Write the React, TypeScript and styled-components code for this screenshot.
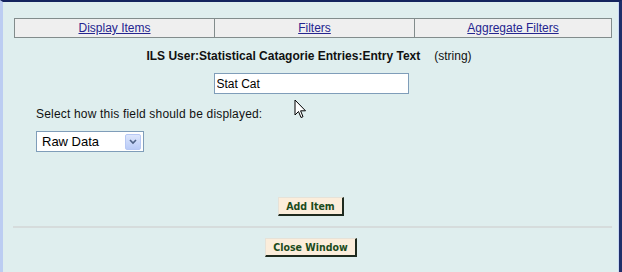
import React from "react";
import styled, { createGlobalStyle } from "styled-components";

const Global = createGlobalStyle`
  html, body { margin: 0; padding: 0; background: #e0eeee; }
  body { font-family: "Liberation Sans", Arial, sans-serif; }
`;

const Frame = styled.div`
  position: relative;
  box-sizing: border-box;
  width: 622px;
  height: 272px;
  overflow: hidden;
  background: #dfeeee;
  border-top: 2px solid #14245e;
  border-left: 3px solid #bccdf2;
  border-right: 3px solid #1e2e6a;
  box-shadow: inset -1px 0 0 #c8d8f4;
  padding: 16px 7px 0 11px;
  display: flex;
  flex-direction: column;
`;

const Tabs = styled.div`
  display: grid;
  grid-template-columns: 200px 200px 1fr;
  height: 20px;
  box-sizing: border-box;
  border: 1px solid #828c8c;
  background: #efefef;
`;

const Tab = styled.a<{ $last?: boolean }>`
  display: flex;
  align-items: center;
  justify-content: center;
  font-size: 12px;
  color: #25258f;
  text-decoration: underline;
  border-right: ${(p) => (p.$last ? "none" : "1px solid #828c8c")};
  cursor: pointer;
`;

const Title = styled.div`
  margin-top: 11px;
  text-align: center;
  font-size: 12px;
  line-height: 14px;
  color: #111;
  padding-right: 8px;
`;

const Bold = styled.b`
  font-weight: bold;
`;

const TypeNote = styled.span`
  margin-left: 14px;
  font-weight: normal;
`;

const InputRow = styled.div`
  display: flex;
  justify-content: center;
  margin-top: 10px;
  padding-right: 4px;
`;

const TextInput = styled.input`
  box-sizing: border-box;
  width: 195px;
  height: 21px;
  border: 1px solid #7f9db9;
  background: #fff;
  font-family: "Liberation Sans", Arial, sans-serif;
  font-size: 12px;
  color: #000;
  padding: 0 2px;
  outline: none;
`;

const Label = styled.div`
  margin-top: 13px;
  margin-left: 22px;
  font-size: 12px;
  line-height: 14px;
  letter-spacing: 0.18px;
  color: #111;
`;

const SelectBox = styled.div`
  margin-top: 10px;
  margin-left: 22px;
  box-sizing: border-box;
  width: 108px;
  height: 21px;
  border: 1px solid #7f9db9;
  background: #fff;
  display: flex;
  align-items: center;
  justify-content: space-between;
  padding: 0 2px 0 5px;
`;

const SelectText = styled.span`
  font-size: 13px;
  color: #000;
`;

const DropButton = styled.span`
  box-sizing: border-box;
  width: 16px;
  height: 16px;
  border: 1px solid #b7c8f4;
  background: linear-gradient(#dde6fc, #b9cbf7);
  border-radius: 2px;
  display: flex;
  align-items: center;
  justify-content: center;
`;

const ButtonRow = styled.div<{ $top: number }>`
  display: flex;
  justify-content: center;
  margin-top: ${(p) => p.$top}px;
  padding-right: 4px;
`;

const ActionButton = styled.button`
  box-sizing: border-box;
  height: 19px;
  padding: 0 7px;
  background: #fbeddb;
  border-style: solid;
  border-width: 1px 2px 2px 1px;
  border-color: #e6e2d8 #1e2a1e #1e2a1e #e6e2d8;
  font-family: "DejaVu Sans Condensed", "DejaVu Sans", Tahoma, sans-serif;
  font-weight: bold;
  font-size: 10.5px;
  color: #1b4b1b;
  cursor: pointer;
`;

const Rule = styled.hr`
  margin: 10px 0 0 -1px;
  border: none;
  height: 2px;
  background: #d6dcdc;
`;

const Cursor = styled.svg`
  position: absolute;
  left: 291px;
  top: 97px;
`;

export default function App() {
  return (
    <>
      <Global />
      <Frame>
        <Tabs>
          <Tab>Display Items</Tab>
          <Tab>Filters</Tab>
          <Tab $last>Aggregate Filters</Tab>
        </Tabs>
        <Title>
          <Bold>ILS User:Statistical Catagorie Entries:Entry Text</Bold>
          <TypeNote>(string)</TypeNote>
        </Title>
        <InputRow>
          <TextInput defaultValue="Stat Cat" />
        </InputRow>
        <Label>Select how this field should be displayed:</Label>
        <SelectBox>
          <SelectText>Raw Data</SelectText>
          <DropButton>
            <svg width="8" height="6" viewBox="0 0 8 6">
              <path d="M1 1 L4 4 L7 1" stroke="#4d6185" strokeWidth="1.6" fill="none" />
            </svg>
          </DropButton>
        </SelectBox>
        <ButtonRow $top={45}>
          <ActionButton>Add Item</ActionButton>
        </ButtonRow>
        <Rule />
        <ButtonRow $top={10}>
          <ActionButton>Close Window</ActionButton>
        </ButtonRow>
        <Cursor width="13" height="21" viewBox="0 0 13 21">
          <path
            d="M1 1 L1 16 L4.5 12.5 L7 18.5 L9 17.7 L6.6 11.8 L11.5 11.8 Z"
            fill="#fff"
            stroke="#000"
            strokeWidth="1"
            strokeLinejoin="miter"
          />
        </Cursor>
      </Frame>
    </>
  );
}
